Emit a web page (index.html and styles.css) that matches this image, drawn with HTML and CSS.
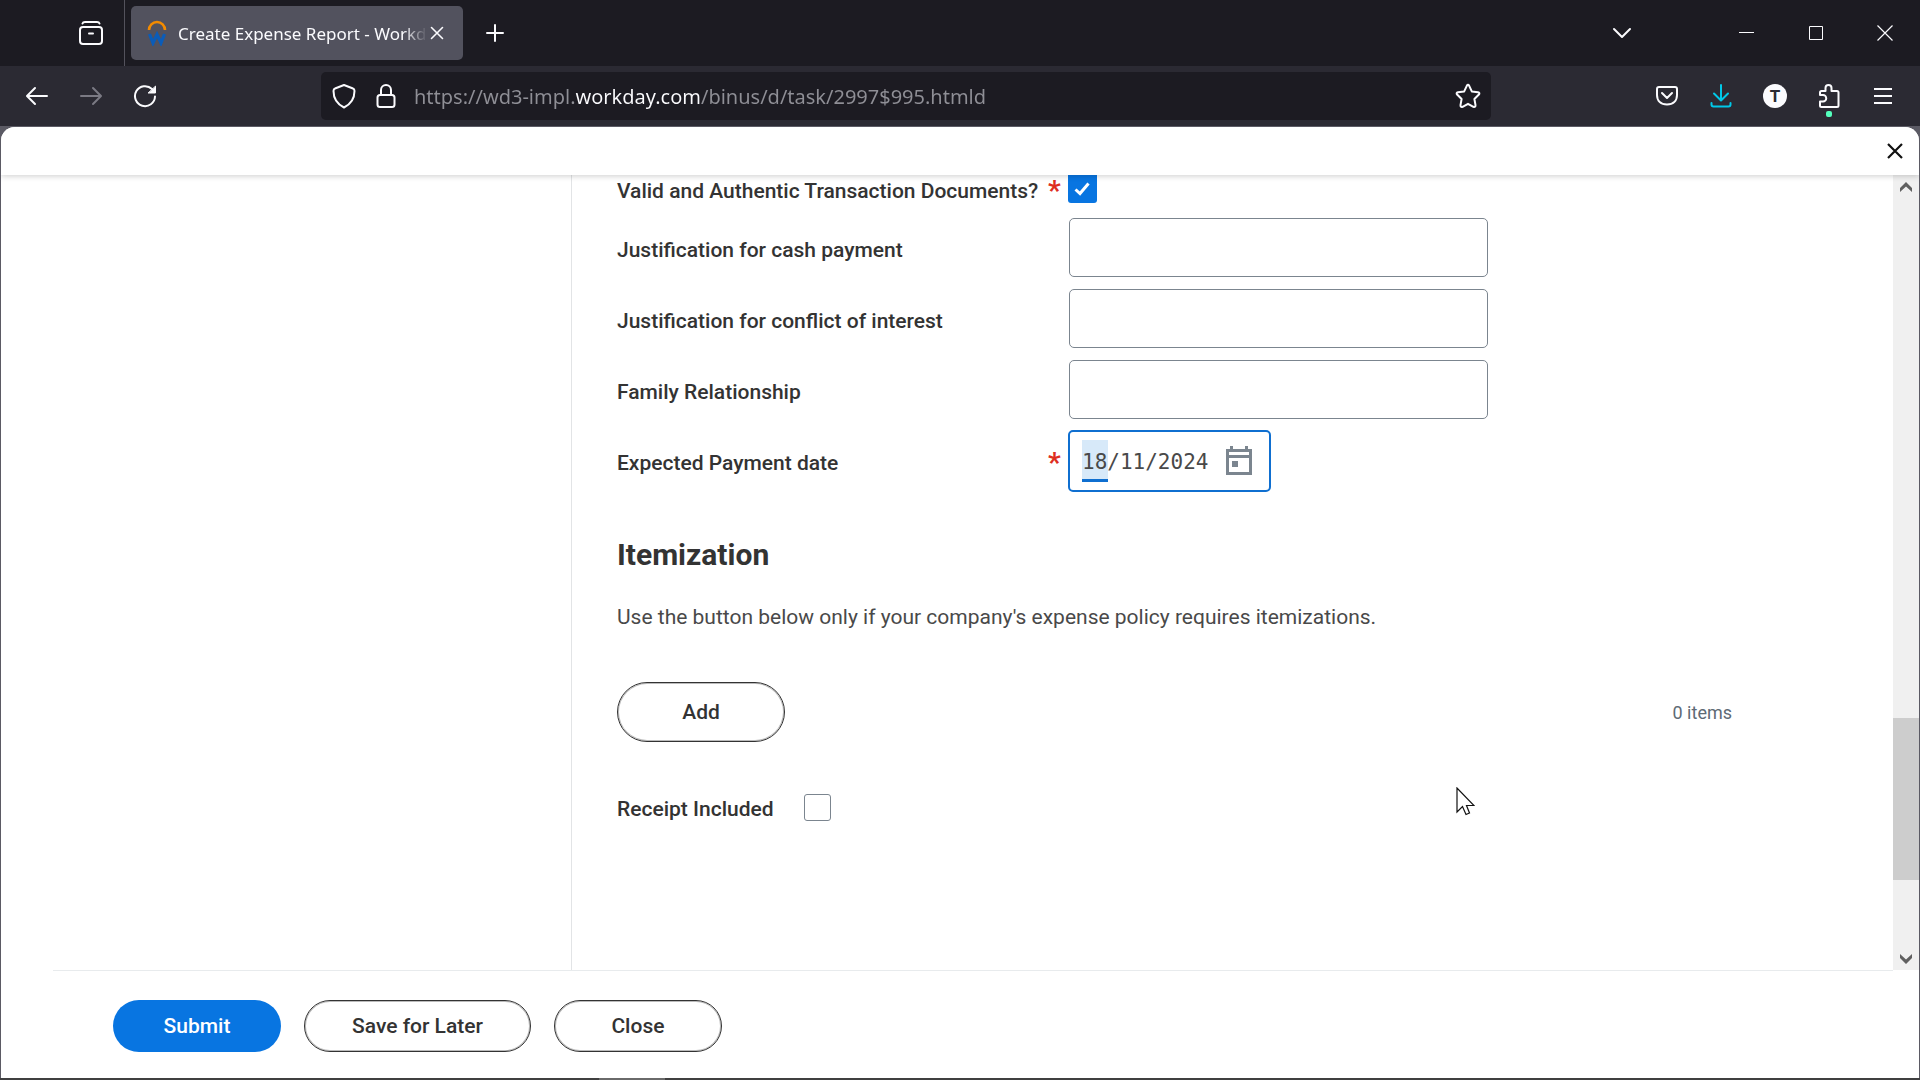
FILE: index.html
```html
<!DOCTYPE html>
<html lang="en">
<head>
<meta charset="utf-8">
<title>Create Expense Report - Workday</title>
<link rel="stylesheet" href="styles.css">
</head>
<body>
<div class="window">
  <header class="tabbar">
    <button class="view-btn" aria-label="View recent browsing">
      <svg width="26" height="26" viewBox="0 0 26 26" fill="none" stroke="currentColor" stroke-width="2" stroke-linecap="round"><path d="M4.500 3.500Q5 2 7 2H19Q21 2 21.500 3.500"/><rect x="2" y="7" width="22" height="17" rx="3"/><path d="M11 13.500h4"/></svg>
    </button>
    <div class="tab">
      <svg class="favicon" width="20" height="26" viewBox="0 0 20 26" fill="none"><path d="M2 10a8 8 0 0 1 16 0" stroke="#f38b00" stroke-width="2.600"/><path d="M2.500 14 6 23 10 14.500 14 23 17.500 14" stroke="#0b5cb8" stroke-width="3.200"/></svg>
      <span class="tab-title">Create Expense Report - Workday</span>
      <button class="tab-close" aria-label="Close tab"><svg width="14" height="14" viewBox="0 0 14 14" stroke="currentColor" stroke-width="1.600" stroke-linecap="round"><path d="M1.500 1.500l11 11M12.500 1.500l-11 11"/></svg></button>
    </div>
    <button class="new-tab" aria-label="New tab"><svg width="20" height="20" viewBox="0 0 20 20" stroke="currentColor" stroke-width="2" stroke-linecap="round"><path d="M10 2v16M2 10h16"/></svg></button>
    <button class="win-btn list-tabs" aria-label="List all tabs"><svg width="20" height="12" viewBox="0 0 20 12" fill="none" stroke="currentColor" stroke-width="2" stroke-linecap="round" stroke-linejoin="round"><path d="M2 2l8 8 8-8"/></svg></button>
    <button class="win-btn" aria-label="Minimize"><svg width="16" height="16" viewBox="0 0 16 16" stroke="currentColor"><path d="M0 7.500h15"/></svg></button>
    <button class="win-btn" aria-label="Maximize"><svg width="16" height="16" viewBox="0 0 16 16" fill="none" stroke="currentColor"><path d="M1.500 1.500h13v13h-13z"/></svg></button>
    <button class="win-btn" aria-label="Close window"><svg width="16" height="16" viewBox="0 0 16 16" stroke="currentColor" stroke-width="1.200"><path d="M.5.5l15 15M15.500.5l-15 15"/></svg></button>
  </header>

  <nav class="toolbar" aria-label="Navigation">
    <button class="tool" aria-label="Back"><svg width="24" height="24" viewBox="0 0 24 24" fill="none" stroke="currentColor" stroke-width="2" stroke-linecap="round" stroke-linejoin="round"><path d="M22 12H2.500M10 4L2 12l8 8"/></svg></button>
    <button class="tool dim" aria-label="Forward"><svg width="24" height="24" viewBox="0 0 24 24" fill="none" stroke="currentColor" stroke-width="2" stroke-linecap="round" stroke-linejoin="round"><path d="M2 12h19.500M14 4l8 8-8 8"/></svg></button>
    <button class="tool" aria-label="Reload"><svg width="24" height="24" viewBox="0 0 24 24" fill="none" stroke="currentColor" stroke-width="2" stroke-linecap="round"><path d="M22 12.500A10 10 0 1 1 19 5"/><path d="M22.500 2.500V9h-7z" fill="currentColor" stroke-width="1" stroke-linejoin="round"/></svg></button>
    <div class="urlbar">
      <svg width="24" height="26" viewBox="0 0 24 26" fill="none" stroke="currentColor" stroke-width="2" stroke-linejoin="round"><path d="M12 2 21 5.500Q22.500 6 22.500 8C22.500 16 18 21.500 12 24.500 6 21.500 1.500 16 1.500 8Q1.500 6 3 5.500z"/></svg>
      <svg width="20" height="26" viewBox="0 0 20 26" fill="none" stroke="currentColor" stroke-width="2"><rect x="1.500" y="12" width="17" height="12" rx="2.500"/><path d="M5 12V7a5 5 0 0 1 10 0v5"/></svg>
      <input class="url" type="text" aria-label="Address" value="https://wd3-impl.workday.com/binus/d/task/2997$995.htmld">
      <svg width="26" height="26" viewBox="0 0 26 26" fill="none" stroke="currentColor" stroke-width="2" stroke-linejoin="round"><path d="M11.800 2.800Q13 .8 14.200 2.800L16.800 8.400 23 9.300Q25.200 9.900 23.900 11.500L19.400 16 20.500 22.200Q20.500 24.600 18.400 23.800L13 20.800 7.600 23.800Q5.500 24.600 5.500 22.200L6.600 16 2.100 11.500Q.8 9.900 3 9.300L9.200 8.400z"/></svg>
    </div>
    <button class="tool" aria-label="Save to Pocket"><svg width="24" height="24" viewBox="0 0 24 24" fill="none" stroke="currentColor" stroke-width="2" stroke-linecap="round" stroke-linejoin="round"><path d="M4 3H20Q22 3 22 5V11C22 17 18 20.500 12 20.500S2 17 2 11V5Q2 3 4 3zM7 9l5 5 5-5"/></svg></button>
    <button class="tool download" aria-label="Downloads"><svg width="24" height="26" viewBox="0 0 24 26" fill="none" stroke="currentColor" stroke-width="2" stroke-linecap="round" stroke-linejoin="round"><path d="M12 2v15M5 10.500l7 7 7-7M2.500 20v1.500Q2.500 23.500 4.500 23.500H19.500Q21.500 23.500 21.500 21.500V20"/></svg></button>
    <button class="tool" aria-label="Account"><span class="avatar">T</span></button>
    <button class="tool ext" aria-label="Extensions"><svg width="24" height="26" viewBox="0 0 24 26" fill="none" stroke="currentColor" stroke-width="2" stroke-linejoin="round"><path d="M3 12V9.500Q3 8 4.500 8H8.500V5a3 3 0 0 1 6 0V8H20Q21.500 8 21.500 9.500V22.500Q21.500 24 20 24H4.500Q3 24 3 22.500V18.500H6a3 3 0 0 0 0-6.500z"/></svg></button>
    <button class="tool" aria-label="Menu"><svg width="18" height="18" viewBox="0 0 18 18" stroke="currentColor" stroke-width="2"><path d="M0 2h18M0 9h18M0 16h18"/></svg></button>
  </nav>

  <div class="viewport">
    <div class="page">
      <div class="page-head">
        <button class="page-close" aria-label="Close"><svg width="16" height="16" viewBox="0 0 16 16" stroke="currentColor" stroke-width="2.200"><path d="M1 1l14 14M15 1L1 15"/></svg></button>
      </div>
      <div class="scroll-area">
        <aside class="side"></aside>
        <main class="form">
          <div class="field first">
            <label for="valid">Valid and Authentic Transaction Documents?</label><span class="req">*</span>
            <input class="check" type="checkbox" id="valid" checked>
          </div>
          <div class="field">
            <label for="cash">Justification for cash payment</label><span class="req"></span>
            <input class="text" type="text" id="cash">
          </div>
          <div class="field">
            <label for="conflict">Justification for conflict of interest</label><span class="req"></span>
            <input class="text" type="text" id="conflict">
          </div>
          <div class="field">
            <label for="family">Family Relationship</label><span class="req"></span>
            <input class="text" type="text" id="family">
          </div>
          <div class="field">
            <label for="date">Expected Payment date</label><span class="req">*</span>
            <div class="date">
              <input type="text" id="date" value="18/11/2024">
              <button class="cal" aria-label="Calendar"><svg width="28" height="30" viewBox="0 0 28 30" fill="#7b858f"><path d="M1 3H27V29H1zM4 12V26H24V12zM4 6V9H24V6z" fill-rule="evenodd"/><path d="M5 0h3v4H5zM20 0h3v4h-3zM7 15h6v6H7z"/></svg></button>
            </div>
          </div>
          <h2>Itemization</h2>
          <p class="hint">Use the button below only if your company's expense policy requires itemizations.</p>
          <div class="add-row">
            <button class="pill add">Add</button>
            <span class="count">0 items</span>
          </div>
          <div class="receipt">
            <label for="receipt">Receipt Included</label>
            <input class="check" type="checkbox" id="receipt">
          </div>
        </main>
        <div class="scrollbar">
          <svg width="14" height="12" viewBox="0 0 14 12" fill="#606060"><path d="M7 1l6 6v4L7 5.500 1 11V7z"/></svg>
          <div class="track"><div class="thumb"></div></div>
          <svg width="14" height="12" viewBox="0 0 14 12" fill="#606060"><path d="M7 11L1 5V1l6 5.500L13 1v4z"/></svg>
        </div>
      </div>
      <footer class="actions">
        <button class="pill primary">Submit</button>
        <button class="pill">Save for Later</button>
        <button class="pill">Close</button>
      </footer>
    </div>
  </div>
  <div class="edge"></div>
  <svg class="cursor" width="19" height="29" viewBox="0 0 19 29" fill="#fff" stroke="#111" stroke-width="1.200"><path d="M1 1V25L6.500 19.500 10 27.500 13.500 26 10.500 18.500H18z"/></svg>
</div>
</body>
</html>
```
FILE: styles.css
```css
* { box-sizing: border-box; }
body { margin: 0; font-family: Roboto, sans-serif; font-size: 21px; color: #333; }
button { border: 0; padding: 0; background: none; color: inherit; font: inherit; display: flex; align-items: center; justify-content: center; }
svg { display: block; flex: none; }

.window { position: relative; display: flex; flex-direction: column; min-height: 100vh; background: #2b2a33; overflow: hidden; }

/* Tab strip */
.tabbar { display: flex; align-items: center; height: 66px; padding-right: 1px; background: #1c1b22; color: #fbfbfe; }
.view-btn { width: 125px; height: 66px; padding-left: 57px; border-right: 1px solid #53525c; }
.tab { display: flex; align-items: center; width: 332px; height: 54px; margin-left: 6px; padding: 0 16px; border-radius: 5px; background: #52525e; font-family: "Noto Sans", sans-serif; font-size: 17px; }
.tab-title { flex: 1; margin-left: 11px; overflow: hidden; white-space: nowrap; -webkit-mask-image: linear-gradient(to left, transparent, #000 24px); mask-image: linear-gradient(to left, transparent, #000 24px); }
.tab-close { width: 20px; height: 20px; }
.new-tab { width: 64px; height: 54px; }
.win-btn { width: 69px; height: 66px; }
.list-tabs { margin: 0 56px 0 auto; }

/* Navigation toolbar */
.toolbar { display: flex; align-items: center; height: 60px; padding: 0 10px; color: #fbfbfe; }
.tool { position: relative; width: 54px; height: 60px; }
.dim { color: #7b7a84; }
.download { color: #00c8e8; }
.urlbar { flex: 1; display: flex; align-items: center; gap: 20px; height: 48px; margin: 0 149px; padding: 0 10px 0 11px; border-radius: 5px; background: #1c1b22; }
.url { flex: 1; min-width: 0; height: 40px; margin-left: -2px; padding: 0; border: 0; outline: 0; font-family: "Noto Sans", sans-serif; font-size: 20px; color: transparent; background: linear-gradient(to right, #8f8f96 162px, #fbfbfe 162px, #fbfbfe 287px, #8f8f96 287px); -webkit-background-clip: text; background-clip: text; }
.avatar { width: 24px; height: 24px; border-radius: 50%; background: #fbfbfe; color: #2b2a33; font-size: 17px; font-weight: 700; line-height: 24px; }
.ext::after { content: ""; position: absolute; left: 24px; bottom: 9px; width: 6px; height: 6px; border-radius: 2px; background: #54ffbd; }

/* Page */
.viewport { flex: 1; display: flex; border: 1px solid #5b5a64; border-bottom: 0; background: #5b5a64; }
.page { flex: 1; display: flex; flex-direction: column; border-radius: 14px 14px 0 0; background: #fff; overflow: hidden; }
.page-head { position: relative; z-index: 1; display: flex; align-items: center; justify-content: flex-end; height: 48px; padding-right: 16px; background: #fff; box-shadow: 0 1px 6px rgba(0, 0, 0, .2); color: #111; }
.scroll-area { flex: 1; display: flex; }
.side { width: 571px; border-right: 1px solid #e2e4e6; }
.form { flex: 1; padding: 0 161px 0 45px; }

.field { display: flex; align-items: center; height: 71px; }
.field label { width: 431px; padding-top: 4px; }
label { font-weight: 500; }
.req { width: 20px; height: 28px; color: #de2e21; font-size: 28px; font-weight: 700; line-height: 32px; }
.first { height: 28px; margin-bottom: 9px; }
.check { appearance: none; width: 27px; height: 27px; margin: 0; border: 1px solid #7b858f; border-radius: 3px; background: #fff; }
.check:checked { width: 29px; height: 28px; border: 0; border-radius: 0 0 3px 3px; background: #0875e1 url("data:image/svg+xml,%3Csvg xmlns='http://www.w3.org/2000/svg' viewBox='0 0 29 28'%3E%3Cpath d='M7.500 14.500l4.500 4L20.500 8.500' fill='none' stroke='%23fff' stroke-width='3'/%3E%3C/svg%3E"); }
.text { width: 419px; height: 59px; margin-left: 1px; padding: 0 12px; border: 1px solid #7b858f; border-radius: 5px; background: #fff; font: inherit; }

.date { display: flex; align-items: center; width: 203px; height: 62px; padding: 0 16px 0 12px; border: 2px solid #0f6fd0; border-radius: 5px; }
.date input { flex: 1; min-width: 0; height: 42px; padding: 2px 0 0; border: 0; outline: 0; font-family: "DejaVu Sans Mono", monospace; font-size: 21px; color: #494949; background: linear-gradient(#d7e9f9 39px, #0f6fd0 39px) 0 0 / 26px 42px no-repeat; }
.cal { width: 28px; height: 30px; }

h2 { margin: 41px 0 0; font-size: 30px; font-weight: 700; line-height: 36px; }
.hint { margin: 30px 0 0; line-height: 28px; color: #494949; }
.add-row { display: flex; align-items: center; justify-content: space-between; margin-top: 51px; }
.pill { height: 52px; min-width: 168px; padding: 0 47px; border: 1px solid #333; border-radius: 30px; background: #fff; box-shadow: inset 0 0 0 1px #bbb; font-weight: 500; }
.add { height: 60px; }
.count { font-size: 18px; color: #5e6a75; }
.receipt { display: flex; align-items: center; gap: 30px; margin-top: 51px; }
.receipt label { padding-top: 4px; }

.scrollbar { display: flex; flex-direction: column; align-items: center; width: 26px; padding: 6px 0 5px; background: #f0f0f0; }
.track { flex: 1; align-self: stretch; display: flex; flex-direction: column; }
.track::before { content: ""; flex: 525; }
.track::after { content: ""; flex: 73; }
.thumb { flex: 162; background: #cdcdcd; }

.actions { position: relative; display: flex; align-items: center; gap: 23px; height: 108px; padding: 4px 112px 0; }
.actions::before { content: ""; position: absolute; left: 52px; right: 26px; top: 0; height: 1px; background: #e8ebed; }
.primary { border: 0; background: #0875e1; box-shadow: none; color: #fff; }

.edge { height: 2px; background: linear-gradient(to right, #404040 599px, #6a6a6a 599px, #6a6a6a 665px, #404040 665px); }
.cursor { position: absolute; left: 1456px; top: 787px; }
```
